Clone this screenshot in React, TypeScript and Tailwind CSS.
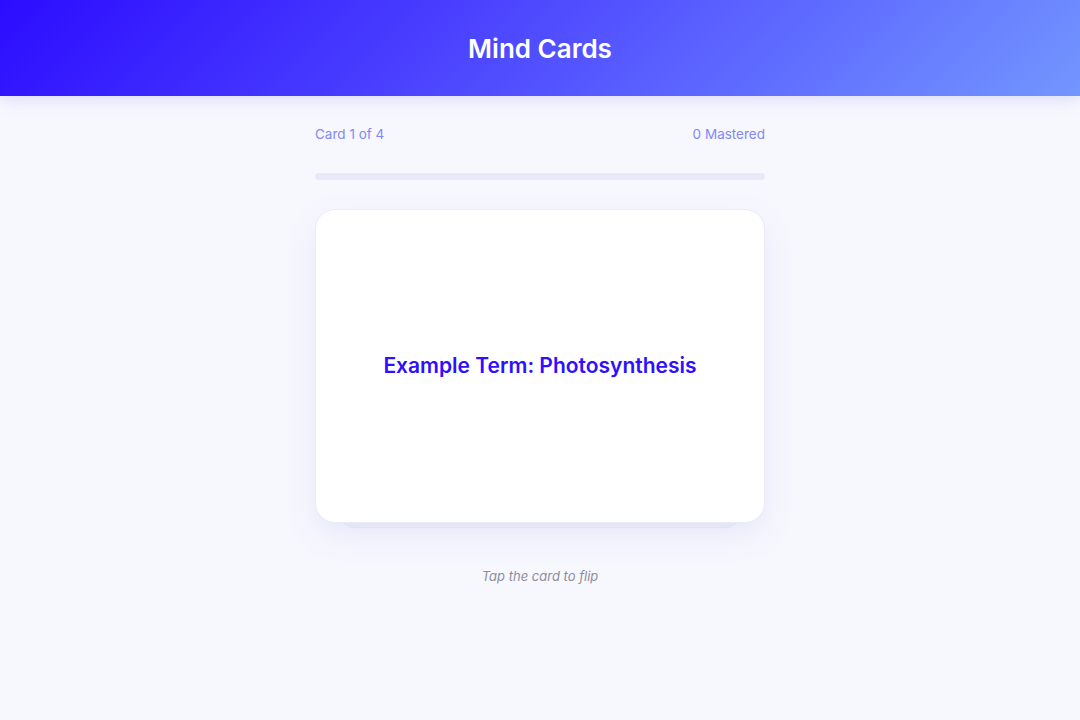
import { useState } from "react";

const cards = [
  { term: "Example Term: Photosynthesis", definition: "The process plants use to turn light into chemical energy." },
  { term: "Mitochondria", definition: "The powerhouse of the cell." },
  { term: "Osmosis", definition: "Movement of water across a membrane." },
  { term: "Enzyme", definition: "A protein that speeds up reactions." },
];

export default function App() {
  const [index] = useState(0);
  const [flipped, setFlipped] = useState(false);
  const mastered = 0;
  const card = cards[index];

  return (
    <div
      className="min-h-screen bg-[#f7f8fe] text-gray-800"
      style={{ fontFamily: "Inter, 'Open Sans', sans-serif" }}
    >
      <header className="h-24 flex items-center justify-center bg-[linear-gradient(135deg,#2c0cff_0%,#4a40ff_40%,#7396ff_100%)] shadow-[0_4px_16px_rgba(80,80,220,0.16)]">
        <h1 className="text-[26px] font-semibold text-white">Mind Cards</h1>
      </header>

      <main className="w-[450px] mx-auto pt-[28px] flex flex-col">
        <div className="flex justify-between text-[13.5px] text-[#8387f7] leading-5">
          <span>Card {index + 1} of {cards.length}</span>
          <span>{mastered} Mastered</span>
        </div>

        <div className="mt-[29px] h-[7px] rounded-full bg-[#e8e8fc]">
          <div className="h-full rounded-full bg-[#4b46ff]" style={{ width: `${(mastered / cards.length) * 100}%` }} />
        </div>

        <div className="relative mt-[29px]">
          <div className="absolute left-[24px] right-[24px] -bottom-[5px] h-6 rounded-b-[16px] bg-[#f1f1fc] border-b border-[#ebebfa]" />
          <button
            onClick={() => setFlipped((f) => !f)}
            className="relative w-full h-[314px] rounded-[20px] bg-white border border-[#ebebf8] shadow-[0_12px_32px_rgba(90,90,200,0.10)] flex items-center justify-center px-8"
          >
            <span className="text-[21px] font-semibold text-[#2e10ff]">
              {flipped ? card.definition : card.term}
            </span>
          </button>
        </div>

        <p className="mt-[44px] text-center text-[13px] italic text-[#8d8d9c]">Tap the card to flip</p>
      </main>
    </div>
  );
}
